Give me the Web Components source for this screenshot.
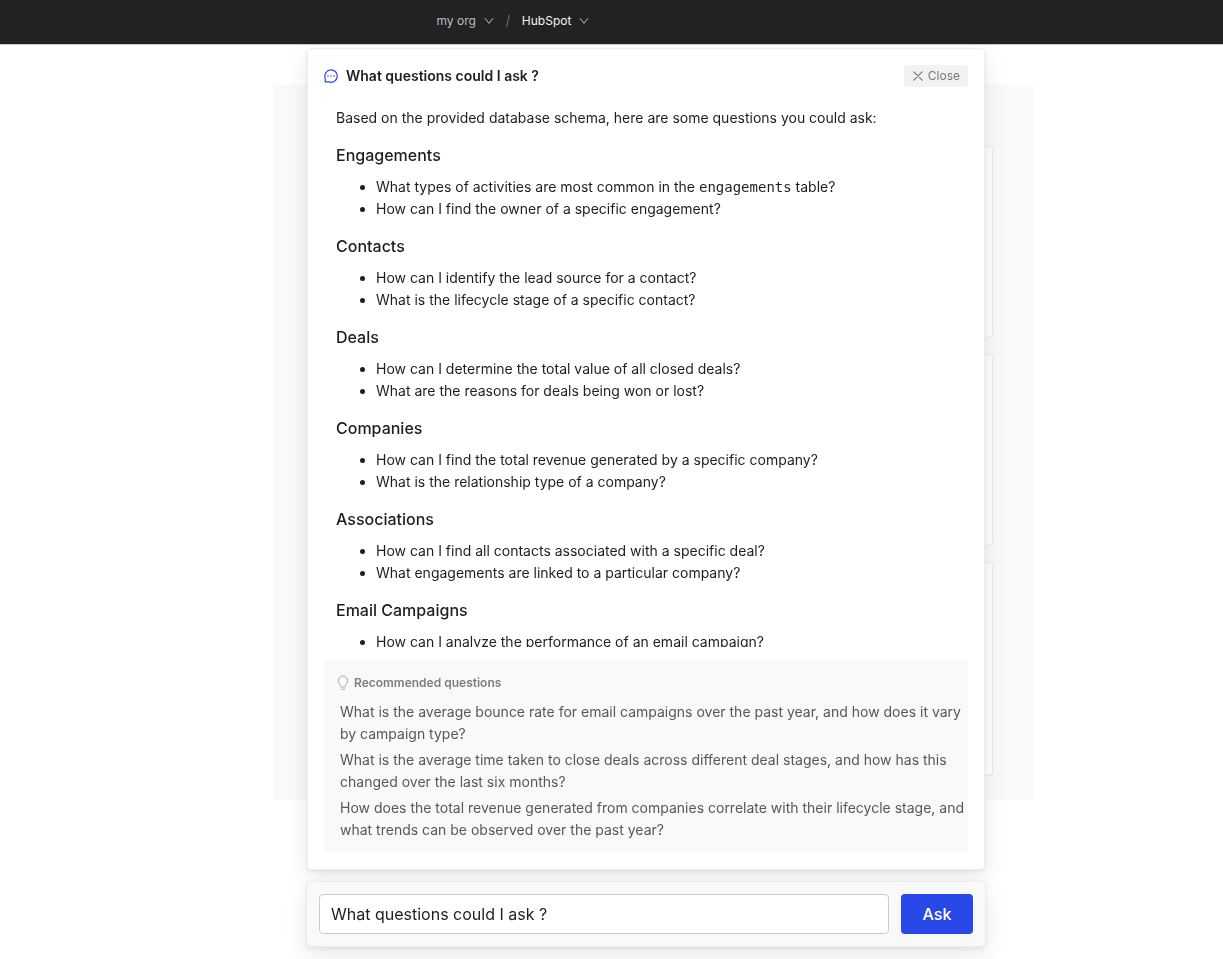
<!DOCTYPE html>
<html lang="en">
<head>
<meta charset="utf-8">
<meta name="viewport" content="width=device-width, initial-scale=1">
<title>HubSpot</title>
<style>
  html, body { height: 100%; }
  body {
    margin: 0;
    background: #fff;
    color: #1c1e22;
    font: 14px/22px Inter, "Liberation Sans", sans-serif;
    overflow: hidden;
  }
</style>
</head>
<body>
<ask-app></ask-app>

<script>
const define = (name, html, setup) => {
  const template = document.createElement('template');
  template.innerHTML = html;
  customElements.define(name, class extends HTMLElement {
    constructor() {
      super();
      this.attachShadow({ mode: 'open' }).append(template.content.cloneNode(true));
    }
    connectedCallback() { if (setup) setup(this, this.shadowRoot); }
  });
};

/* Line icons, coloured by currentColor */
define('line-icon', `
  <style>
    :host { display: inline-flex; flex: none; }
    svg { display: none; fill: none; stroke: currentColor; stroke-linecap: round; stroke-linejoin: round; }
    :host([name=chevron]) .chevron, :host([name=chat]) .chat,
    :host([name=cross]) .cross, :host([name=bulb]) .bulb { display: block; }
  </style>
  <svg class="chevron" width="10" height="8" viewBox="0 0 10 8" aria-hidden="true"><path d="M1.200 1.500 5 6.300 8.800 1.500"/></svg>
  <svg class="chat" width="14" height="14" viewBox="0 0 14 14" stroke-width="1.2" aria-hidden="true">
    <path d="M1.200 12.900V9.100A6.200 6.200 0 1 1 4.900 12.900Z"/>
    <path d="M4 7h.01M7 7h.01M10 7h.01" stroke-width="1.5"/>
  </svg>
  <svg class="cross" width="10" height="10" viewBox="0 0 10 10" stroke-width="1.2" aria-hidden="true"><path d="m.8.8 8.400 8.400M9.200.8.8 9.200"/></svg>
  <svg class="bulb" width="14" height="16" viewBox="0 0 14 16" aria-hidden="true">
    <path d="M4.800 11.600C4.800 9.800 2.300 8.600 2.300 5.700a4.700 4.700 0 0 1 9.400 0c0 2.900-2.500 4.100-2.500 5.900Z"/>
    <path d="M5.200 14.200h3.600"/>
  </svg>
`);

define('crumb-button', `
  <style>
    :host { display: block; color: #bdbdbd; }
    :host([current]) { color: #f2f2f2; }
    button { all: unset; display: flex; align-items: center; gap: 8px; font-size: 12px; line-height: 20px; cursor: pointer; }
    line-icon { color: #bdbdbd; }
  </style>
  <button type="button"><slot></slot><line-icon name="chevron"></line-icon></button>
`);

define('top-bar', `
  <style>
    :host { display: block; box-sizing: border-box; height: 45px; background: #222; border-bottom: 1px solid #ccc; }
    nav { display: flex; align-items: center; gap: 12px; max-width: 350px; height: 42px; margin: 0 auto; }
    svg { display: block; }
  </style>
  <nav aria-label="Breadcrumb">
    <crumb-button>my org</crumb-button>
    <svg width="4" height="14" viewBox="0 0 4 14" fill="none" stroke="#66666a" stroke-width="1.2" aria-hidden="true"><path d="M3.400 1 .6 13"/></svg>
    <crumb-button current>HubSpot</crumb-button>
  </nav>
`);

define('result-board', `
  <style>
    :host { display: block; margin: 40px 0 0 83px; }
    section { display: grid; gap: 16px; box-sizing: border-box; max-width: 760px; margin: 0 auto; padding: 61px 40px 24px; background: #f9f9f9; }
    div { height: 190px; border: 1px solid #e9e9e9; border-radius: 4px; background: #fff; }
    div:last-child { height: 212px; }
  </style>
  <section aria-label="Results"><div></div><div></div><div></div></section>
`);

define('question-group', `
  <style>
    :host { display: block; margin-top: 15px; }
    h4 { margin: 0 0 10px; font-size: 16px; line-height: 22px; font-weight: 500; }
    ul { margin: 0; padding-left: 40px; }
  </style>
  <h4></h4>
  <ul></ul>
`, (host, root) => {
  root.querySelector('h4').textContent = host.getAttribute('heading');
  const list = root.querySelector('ul');
  [...host.children].forEach((item, i) => {
    item.slot = 'q' + i;
    const li = document.createElement('li');
    const slot = document.createElement('slot');
    slot.name = item.slot;
    li.append(slot);
    list.append(li);
  });
});

define('recommended-questions', `
  <style>
    :host { display: block; flex: none; padding: 12px 0 12px 12px; border-radius: 4px; background: #f9f9f9; color: #55575c; }
    h5 { display: flex; align-items: center; gap: 4px; margin: 0 0 6px; font-size: 12px; line-height: 24px; font-weight: 600; color: #7d7d7d; }
    line-icon { color: #aaa; }
    ul { display: grid; gap: 4px; margin: 0; padding: 0 0 0 4px; list-style: none; }
    button { all: unset; display: block; cursor: pointer; }
  </style>
  <h5><line-icon name="bulb"></line-icon>Recommended questions</h5>
  <ul>
    <li><button type="button">What is the average bounce rate for email campaigns over the past year, and how does it vary by campaign type?</button></li>
    <li><button type="button">What is the average time taken to close deals across different deal stages, and how has this changed over the last six months?</button></li>
    <li><button type="button">How does the total revenue generated from companies correlate with their lifecycle stage, and what trends can be observed over the past year?</button></li>
  </ul>
`);

define('answer-panel', `
  <style>
    :host {
      display: flex; flex-direction: column; flex: 1; min-height: 0; box-sizing: border-box;
      margin: 0 1px; padding: 16px; border: 1px solid #eee; border-radius: 4px; background: #fff;
      background-clip: padding-box;
      box-shadow: 0 2px 4px rgba(0,0,0,.07), 0 8px 24px rgba(0,0,0,.09);
    }
    header { display: flex; align-items: center; gap: 8px; height: 22px; }
    header line-icon[name=chat] { color: #2848e8; }
    h3 { flex: 1; margin: 0; font-size: 14px; line-height: 22px; font-weight: 600; }
    header button { display: flex; align-items: center; gap: 5px; height: 22px; padding: 0 8px 0 9px; border: 0; border-radius: 3px; background: #f2f2f2; color: #757575; font: 12px/22px Inter, sans-serif; cursor: pointer; }
    article { flex: 1; min-height: 0; overflow: hidden; margin-bottom: 12px; padding: 20px 12px 0; }
    p { margin: 0; }
    code { font: 14px/20px "DejaVu Sans Mono", monospace; }
  </style>
  <header>
    <line-icon name="chat"></line-icon>
    <h3>What questions could I ask ?</h3>
    <button type="button"><line-icon name="cross"></line-icon>Close</button>
  </header>
  <article>
    <p>Based on the provided database schema, here are some questions you could ask:</p>
    <question-group heading="Engagements">
      <span>What types of activities are most common in the <code>engagements</code> table?</span>
      <span>How can I find the owner of a specific engagement?</span>
    </question-group>
    <question-group heading="Contacts">
      <span>How can I identify the lead source for a contact?</span>
      <span>What is the lifecycle stage of a specific contact?</span>
    </question-group>
    <question-group heading="Deals">
      <span>How can I determine the total value of all closed deals?</span>
      <span>What are the reasons for deals being won or lost?</span>
    </question-group>
    <question-group heading="Companies">
      <span>How can I find the total revenue generated by a specific company?</span>
      <span>What is the relationship type of a company?</span>
    </question-group>
    <question-group heading="Associations">
      <span>How can I find all contacts associated with a specific deal?</span>
      <span>What engagements are linked to a particular company?</span>
    </question-group>
    <question-group heading="Email Campaigns">
      <span>How can I analyze the performance of an email campaign?</span>
    </question-group>
  </article>
  <recommended-questions></recommended-questions>
`);

define('ask-composer', `
  <style>
    :host { display: block; flex: none; border: 1px solid #ececec; border-radius: 4px; background: #f9f9f9; background-clip: padding-box; box-shadow: 0 2px 4px rgba(0,0,0,.07), 0 8px 24px rgba(0,0,0,.09); }
    form { display: flex; gap: 12px; padding: 12px; }
    input { flex: 1; min-width: 0; box-sizing: border-box; height: 40px; padding: 0 11px; border: 1px solid #ccc; border-radius: 4px; background: #fff; color: #1c1e22; font: 16px/24px Inter, sans-serif; outline: 0; }
    button { width: 72px; height: 40px; padding: 0; border: 0; border-radius: 4px; background: #2848e8; color: #fff; font: 500 16px/24px Inter, sans-serif; cursor: pointer; }
  </style>
  <form>
    <input type="text" aria-label="Your question" value="What questions could I ask ?">
    <button type="button">Ask</button>
  </form>
`);

define('ask-app', `
  <style>
    :host { display: block; height: 100%; }
    aside { position: fixed; inset: 48px 0 12px 69px; display: flex; justify-content: center; }
    .stack { display: flex; flex-direction: column; gap: 11px; width: 100%; max-width: 680px; }
  </style>
  <top-bar></top-bar>
  <result-board></result-board>
  <aside>
    <div class="stack">
      <answer-panel></answer-panel>
      <ask-composer></ask-composer>
    </div>
  </aside>
`);
</script>
</body>
</html>
